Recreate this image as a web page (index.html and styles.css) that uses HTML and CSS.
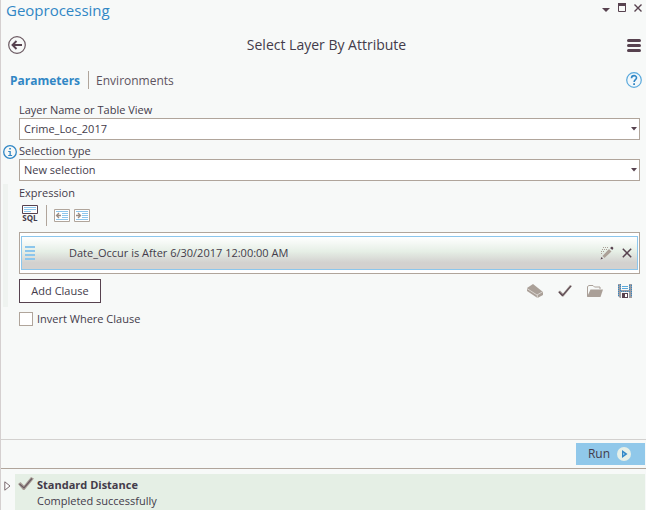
FILE: index.html
```html
<!DOCTYPE html>
<html lang="en">
<head>
<meta charset="utf-8">
<title>Geoprocessing</title>
<link rel="stylesheet" href="styles.css">
</head>
<body>
<main class="pane">
  <header class="titlebar">
    <h1>Geoprocessing</h1>
    <div class="window-buttons">
      <button aria-label="Pane options"><svg width="8" height="12"><path d="M0 6h8L4 10z" fill="#57424f"/></svg></button>
      <button aria-label="Maximize"><svg width="8" height="12"><path d="M.5 2v7.500h7V2" fill="none" stroke="#57424f"/><path d="M0 1h8v3H0z" fill="#57424f"/></svg></button>
      <button aria-label="Close"><svg width="8" height="12"><path d="M.5 2.500l7 7M7.500 2.500l-7 7" stroke="#57424f" stroke-width="1.400"/></svg></button>
    </div>
  </header>

  <div class="toolhead">
    <button aria-label="Back"><svg width="18" height="18"><circle cx="9" cy="9" r="8.300" fill="none" stroke="#6b5a62" stroke-width="1.200"/><path d="M14 9H5M8.500 5L4.500 9l4 4" fill="none" stroke="#57424f" stroke-width="1.900"/></svg></button>
    <h2>Select Layer By Attribute</h2>
    <button aria-label="Menu"><svg width="14" height="13"><path d="M1.500 1.500h11M1.500 6.500h11M1.500 11.500h11" stroke="#57424f" stroke-width="3" stroke-linecap="round"/></svg></button>
  </div>

  <nav class="tabs">
    <a class="tab active" href="#parameters">Parameters</a>
    <a class="tab" href="#environments">Environments</a>
    <button class="help" aria-label="Help"><svg width="16" height="16"><circle cx="8" cy="8" r="7.300" fill="#f2f8fb" stroke="#5aa9dc" stroke-width="1.200"/><path d="M5.500 6.200C5.500 2.800 10.700 2.900 10.500 6c-.1 1.600-2.400 1.800-2.400 4" fill="none" stroke="#3187c5" stroke-width="1.600"/><path d="M7.200 11.300h1.800V13H7.200z" fill="#3187c5"/></svg></button>
  </nav>

  <form class="form" id="parameters">
    <div class="field">
      <label for="layer">Layer Name or Table View</label>
      <div class="combo">
        <select id="layer"><option>Crime_Loc_2017</option></select>
        <svg width="6" height="4"><path d="M0 0h6L3 3.500z" fill="#57424f"/></svg>
      </div>
    </div>
    <div class="field">
      <svg class="info" width="14" height="14"><circle cx="7" cy="7" r="6.300" fill="#f7f9f8" stroke="#3187c5" stroke-width="1.300"/><path d="M6.200 3h1.700v1.500H6.200zM5.200 6h2.600v4h1.300v1H5.200v-1h1.300V7H5.200z" fill="#3187c5"/></svg>
      <label for="type">Selection type</label>
      <div class="combo">
        <select id="type"><option>New selection</option></select>
        <svg width="6" height="4"><path d="M0 0h6L3 3.500z" fill="#57424f"/></svg>
      </div>
    </div>

    <section class="expression">
      <h3>Expression</h3>
      <div class="toolbar">
        <button type="button" class="sql" aria-label="SQL editor">
          <svg width="16" height="9"><path d="M.5.5h15v8H.5z" fill="#fff" stroke="#57424f"/><path d="M2 2.500h12M2 4.500h12M2 6.500h7" stroke="#8cc6ec"/></svg>
          <span>SQL</span>
        </button>
        <button type="button" aria-label="Ungroup clause"><svg width="16" height="13"><path d="M.5.500h15v12H.5z" fill="#fff" stroke="#b0a59b"/><path d="M2 2.500h12M8 4.500h6M8 6.500h6M8 8.500h6M2 10.500h12" stroke="#8cc6ec"/><path d="M7 6.500H3M5 4L2.500 6.500 5 9" fill="none" stroke="#988b82" stroke-width="1.300"/></svg></button>
        <button type="button" aria-label="Group clause"><svg width="16" height="13"><path d="M.5.500h15v12H.5z" fill="#fff" stroke="#b0a59b"/><path d="M2 2.500h12M8 4.500h6M8 6.500h6M8 8.500h6M2 10.500h12" stroke="#8cc6ec"/><path d="M2 6.500h4M4 4l2.500 2.500L4 9" fill="none" stroke="#988b82" stroke-width="1.300"/></svg></button>
      </div>
      <div class="clauses">
        <div class="clause">
          <svg width="10" height="14"><path d="M0 1h10M0 5h10M0 9h10M0 13h10" stroke="#8cc6ec" stroke-width="2"/></svg>
          <span>Date_Occur is After 6/30/2017 12:00:00 AM</span>
          <button type="button" aria-label="Edit clause"><svg width="14" height="14"><path d="M2.500 10L9 3l2.500 2.500-7 6.500z" fill="#aba097"/><path d="M10 2l2-1.500L13.500 2 12.300 4zM.5 13.500L1.500 11l1.500 1.500z" fill="#57424f"/><path d="M3 1.500h5M2 3.500h5M1 5.500h4M1 7.500h2" stroke="#a99e96" stroke-dasharray="1 1"/></svg></button>
          <button type="button" aria-label="Remove clause"><svg width="10" height="10"><path d="M.8.800l8.400 8.400M9.200.800L.8 9.200" stroke="#57424f" stroke-width="1.500"/></svg></button>
        </div>
      </div>
      <div class="actions">
        <button type="button" class="add">Add Clause</button>
        <button type="button" aria-label="Clear expression"><svg width="16" height="14"><path d="M0 4L6 0l10 8v3l-5.500 3L0 7z" fill="#aaa098"/><path d="M0 4.500l10 6.500 6-3.500M10.300 11v3" fill="none" stroke="#e4e1dd" stroke-width=".8"/></svg></button>
        <button type="button" aria-label="Verify expression"><svg width="14" height="12"><path d="M0 7l2-1.500 3 3L12 0l2 1L5.500 11.500H4z" fill="#a09590"/><path d="M1 7l3.500 3.500L13 1" fill="none" stroke="#57424f" stroke-width="1.100"/></svg></button>
        <button type="button" aria-label="Load expression"><svg width="16" height="12"><path d="M.5 11.500V1.500L2 .5h4l1.500 1.500H13v2" fill="#f7f9f8" stroke="#aaa098"/><path d="M0 12L3.500 4.500H16L13.500 12z" fill="#aaa098"/></svg></button>
        <button type="button" aria-label="Save expression"><svg width="14" height="14"><path d="M0 0h14v14H2l-2-2z" fill="#9c9ca2"/><path d="M.5 1v11M13.500 1v12M2.500 0v7.500h9V0" fill="none" stroke="#3187c5" stroke-dasharray="1 1"/><path d="M3 0h8v6H3z" fill="#f7f9f8"/><path d="M4 2.500h6M4 4.500h6" stroke="#5aa9dc"/><path d="M3 8h8v6H3z" fill="#f7f9f8"/><path d="M4 9h6v5H4z" fill="#57424f"/><path d="M7 10h2v3H7z" fill="#fff"/></svg></button>
      </div>
    </section>
    <label class="check"><input type="checkbox">Invert Where Clause</label>
  </form>

  <footer class="runbar">
    <button class="run">Run
      <svg width="14" height="14"><circle cx="7" cy="7" r="7" fill="#e6f0e8"/><path d="M5 3l5.500 4L5 11z" fill="#3187c5"/><path d="M6 5.500L8 7 6 8.500z" fill="#8cc6ec"/></svg>
    </button>
  </footer>

  <section class="history">
    <button aria-label="Expand"><svg width="7" height="10"><path d="M.8.800L6 5 .8 9.200z" fill="#fff" stroke="#7a6a70"/></svg></button>
    <div class="result">
      <svg width="16" height="13"><path d="M0 7l2.500-2L6 8.500 13 0l3 1.500L6.500 13H5z" fill="#a99f98"/><path d="M1.500 7L6 11l8-9.500" fill="none" stroke="#6b5a62" stroke-width="1.200"/></svg>
      <div><strong>Standard Distance</strong><p>Completed successfully</p></div>
    </div>
  </section>
</main>
</body>
</html>
```
FILE: styles.css
```css
* { box-sizing: border-box; }

body {
  margin: 0;
  background: #f7f9f8;
  color: #433b4a;
  font: 11px/16px "Open Sans", "Noto Sans", sans-serif;
}

h1, h2, h3, p { margin: 0; font-weight: 400; }

button {
  display: flex;
  align-items: center;
  padding: 0;
  border: 0;
  background: none;
  color: inherit;
  font: inherit;
}

svg { display: block; flex: none; }

.pane {
  display: flex;
  flex-direction: column;
  min-height: 100vh;
  border-left: 1px solid #d5d0d0;
}

.titlebar {
  display: flex;
  justify-content: space-between;
  min-height: 22px;
  padding: 0 4px 0 5px;
}

.titlebar h1 { color: #3187c5; font-size: 15px; line-height: 20px; }

.window-buttons { display: flex; align-items: flex-start; gap: 8px; padding-top: 2px; }

.toolhead {
  display: flex;
  align-items: center;
  justify-content: space-between;
  height: 46px;
  padding: 0 5px 0 7px;
}

.toolhead h2 { font-size: 14px; line-height: 20px; }

.tabs {
  display: flex;
  align-items: center;
  height: 24px;
  padding: 0 4px 0 9px;
}

.tab {
  padding-top: 2px;
  color: #5d545f;
  font-size: 12px;
  line-height: 16px;
  text-decoration: none;
}

.tab + .tab { margin-left: 8px; padding-left: 7px; border-left: 1px solid #b0a59b; }
.tab.active { color: #3187c5; font-weight: 700; }
.help { margin-left: auto; }

.form {
  flex: 1;
  display: flex;
  flex-direction: column;
  padding: 10px 6px 10px 2px;
}

.field { position: relative; padding-left: 16px; margin-bottom: 3px; }
.field label { display: block; }
.info { position: absolute; left: 0; top: 2px; }
.combo { display: grid; align-items: center; }
.combo > * { grid-area: 1 / 1; }
.combo svg { justify-self: end; margin-right: 3px; pointer-events: none; }

.combo select {
  appearance: none;
  width: 100%;
  height: 22px;
  padding: 0 16px 0 4px;
  border: 1px solid #b0a59b;
  border-radius: 0;
  background: #fff;
  color: inherit;
  font: inherit;
}

.expression { padding-left: 11px; border-left: 5px solid #eff3f0; }
.expression h3 { font-size: 11px; line-height: 18px; }

.toolbar { display: flex; align-items: center; gap: 4px; height: 30px; padding: 0 0 4px 3px; }

.sql {
  flex-direction: column;
  padding-right: 8px;
  margin-right: 3px;
  width: 25px;
  height: 21px;
  border-right: 1px solid #b0a59b;
  font-size: 8px;
  font-weight: 700;
  line-height: 8px;
}

.clauses { padding: 3px 1px; border: 1px solid #b0a59b; background: #fff; }

.clause {
  display: flex;
  align-items: center;
  gap: 8px;
  height: 34px;
  padding: 0 5px 0 3px;
  border: 1px solid #8cc6ec;
  background: linear-gradient(#fff, #e6efe6 45%, #d3d1cf 80%, #d3d1cf);
}

.clause span { flex: 1; padding-left: 26px; }

.actions { display: flex; align-items: center; gap: 15px; padding: 5px 8px 4px 0; }

.add {
  justify-content: center;
  margin-right: auto;
  width: 82px;
  height: 24px;
  border: 1px solid #57424f;
  background: #fff;
}

.check { display: flex; align-items: center; gap: 4px; padding: 4px 0 0 16px; }

.check input {
  appearance: none;
  width: 14px;
  height: 14px;
  margin: 0;
  border: 1px solid #b0a59b;
  background: #fff;
}

.runbar {
  display: flex;
  justify-content: flex-end;
  padding: 3px 1px;
  border-top: 1px solid #d3d1cf;
  border-bottom: 1px solid #b0a59b;
}

.run { gap: 7px; height: 22px; padding: 0 14px 0 12px; background: #90c8ea; font-size: 12px; }

.history { display: flex; padding-top: 5px; }
.history > button { align-self: flex-start; width: 14px; height: 23px; padding-left: 3px; }

.result {
  flex: 1;
  display: flex;
  gap: 3px;
  margin-right: 1px;
  padding: 3px 3px 1px;
  background: #e5efe5;
}
```
